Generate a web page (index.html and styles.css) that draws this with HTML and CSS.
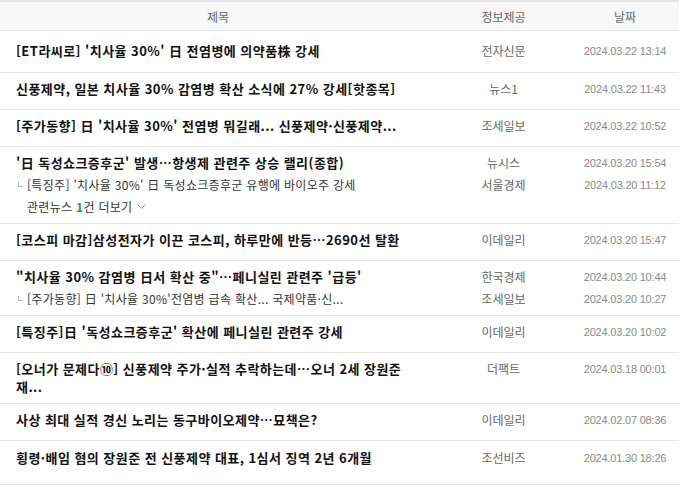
FILE: index.html
```html
<!DOCTYPE html>
<html lang="ko">
<head>
    <meta charset="UTF-8">
    <meta name="viewport" content="width=device-width, initial-scale=1.0">
    <title>종목 뉴스</title>
    <link rel="stylesheet" href="styles.css">
</head>
<body>
    <div class="news-table">
        <div class="head">
            <span>제목</span>
            <span>정보제공</span>
            <span>날짜</span>
        </div>

        <div class="item first">
            <div class="line">
                <a class="title" href="#">[ET라씨로] '치사율 30%' 日 전염병에 의약품株 강세</a>
                <span class="info">전자신문</span>
                <span class="date">2024.03.22 13:14</span>
            </div>
        </div>

        <div class="item">
            <div class="line">
                <a class="title" href="#">신풍제약, 일본 치사율 30% 감염병 확산 소식에 27% 강세[핫종목]</a>
                <span class="info">뉴스1</span>
                <span class="date">2024.03.22 11:43</span>
            </div>
        </div>

        <div class="item">
            <div class="line">
                <a class="title" href="#">[주가동향] 日 '치사율 30%' 전염병 뭐길래... 신풍제약·신풍제약...</a>
                <span class="info">조세일보</span>
                <span class="date">2024.03.22 10:52</span>
            </div>
        </div>

        <div class="item has-rel">
            <div class="line">
                <a class="title" href="#">'日 독성쇼크증후군' 발생…항생제 관련주 상승 랠리(종합)</a>
                <span class="info">뉴시스</span>
                <span class="date">2024.03.20 15:54</span>
            </div>
            <div class="line rel">
                <a class="title" href="#">[특징주] '치사율 30%' 日 독성쇼크증후군 유행에 바이오주 강세</a>
                <span class="info">서울경제</span>
                <span class="date">2024.03.20 11:12</span>
            </div>
            <div class="more">
                관련뉴스 <em>1</em>건 더보기
                <svg width="9" height="6" viewBox="0 0 9 6"><polyline points="0.5,0.5 4.5,4.5 8.5,0.5" fill="none" stroke="#999" stroke-width="1"/></svg>
            </div>
        </div>

        <div class="item">
            <div class="line">
                <a class="title" href="#">[코스피 마감]삼성전자가 이끈 코스피, 하루만에 반등…2690선 탈환</a>
                <span class="info">이데일리</span>
                <span class="date">2024.03.20 15:47</span>
            </div>
        </div>

        <div class="item has-rel">
            <div class="line">
                <a class="title" href="#">"치사율 30% 감염병 日서 확산 중"…페니실린 관련주 '급등'</a>
                <span class="info">한국경제</span>
                <span class="date">2024.03.20 10:44</span>
            </div>
            <div class="line rel">
                <a class="title" href="#">[주가동향] 日 '치사율 30%'전염병 급속 확산... 국제약품·신...</a>
                <span class="info">조세일보</span>
                <span class="date">2024.03.20 10:27</span>
            </div>
        </div>

        <div class="item">
            <div class="line">
                <a class="title" href="#">[특징주]日 '독성쇼크증후군' 확산에 페니실린 관련주 강세</a>
                <span class="info">이데일리</span>
                <span class="date">2024.03.20 10:02</span>
            </div>
        </div>

        <div class="item wrap">
            <div class="line">
                <a class="title" href="#">[오너가 문제다⑩] 신풍제약 주가·실적 추락하는데…오너 2세 장원준 재...</a>
                <span class="info">더팩트</span>
                <span class="date">2024.03.18 00:01</span>
            </div>
        </div>

        <div class="item">
            <div class="line">
                <a class="title" href="#">사상 최대 실적 경신 노리는 동구바이오제약…묘책은?</a>
                <span class="info">이데일리</span>
                <span class="date">2024.02.07 08:36</span>
            </div>
        </div>

        <div class="item last">
            <div class="line">
                <a class="title" href="#">횡령·배임 혐의 장원준 전 신풍제약 대표, 1심서 징역 2년 6개월</a>
                <span class="info">조선비즈</span>
                <span class="date">2024.01.30 18:26</span>
            </div>
        </div>
    </div>
</body>
</html>
```

FILE: styles.css
```css
/* General Styles */
body {
    margin: 0;
    padding: 0;
    background: #fff;
    font-family: 'Noto Sans CJK KR', 'Noto Sans', sans-serif;
    font-size: 12px;
    color: #333;
}

.news-table {
    width: 679px;
    border-top: 2px solid #e5e5e5;
}

/* Header */
.head {
    display: grid;
    grid-template-columns: 436px 135px 108px;
    background: #f8f8f8;
    border-bottom: 1px solid #e5e5e5;
    height: 27px;
    padding-top: 1px;
    line-height: 28px;
    color: #666;
    text-align: center;
}

/* Rows */
.item {
    border-bottom: 1px solid #e5e5e5;
    padding: 7px 0 11px;
}

.item.first {
    padding: 11px 0 12px;
}

.item.has-rel {
    padding-bottom: 7px;
}

.item.wrap {
    padding-bottom: 7px;
}

.item.last {
    padding: 8px 0 17px;
}

.line {
    display: grid;
    grid-template-columns: 436px 135px 108px;
    align-items: start;
    line-height: 18px;
}

.title {
    padding: 0 24px 0 16px;
    font-size: 13px;
    font-weight: bold;
    color: #111;
    text-decoration: none;
    letter-spacing: 0.45px;
}

.info {
    text-align: center;
    color: #666;
}

.date {
    text-align: center;
    font-family: 'Liberation Sans', Arial, sans-serif;
    font-size: 11px;
    letter-spacing: -0.2px;
    color: #8a8a8a;
}

/* Related news */
.rel {
    margin-top: 4px;
}

.rel .title {
    position: relative;
    padding-left: 27px;
    font-size: 12px;
    font-weight: normal;
    color: #333;
    letter-spacing: 0.3px;
}

.rel .title::before {
    content: "";
    position: absolute;
    left: 18px;
    top: 6px;
    width: 4px;
    height: 4px;
    border-left: 1px solid #bbb;
    border-bottom: 1px solid #bbb;
}

.more {
    margin-top: 4px;
    padding-left: 27px;
    line-height: 18px;
    color: #333;
    letter-spacing: 0.3px;
}

.more em {
    font-style: normal;
    font-weight: bold;
    color: #1fa33a;
}

.more svg {
    margin-left: 1px;
    vertical-align: 2px;
}
```
